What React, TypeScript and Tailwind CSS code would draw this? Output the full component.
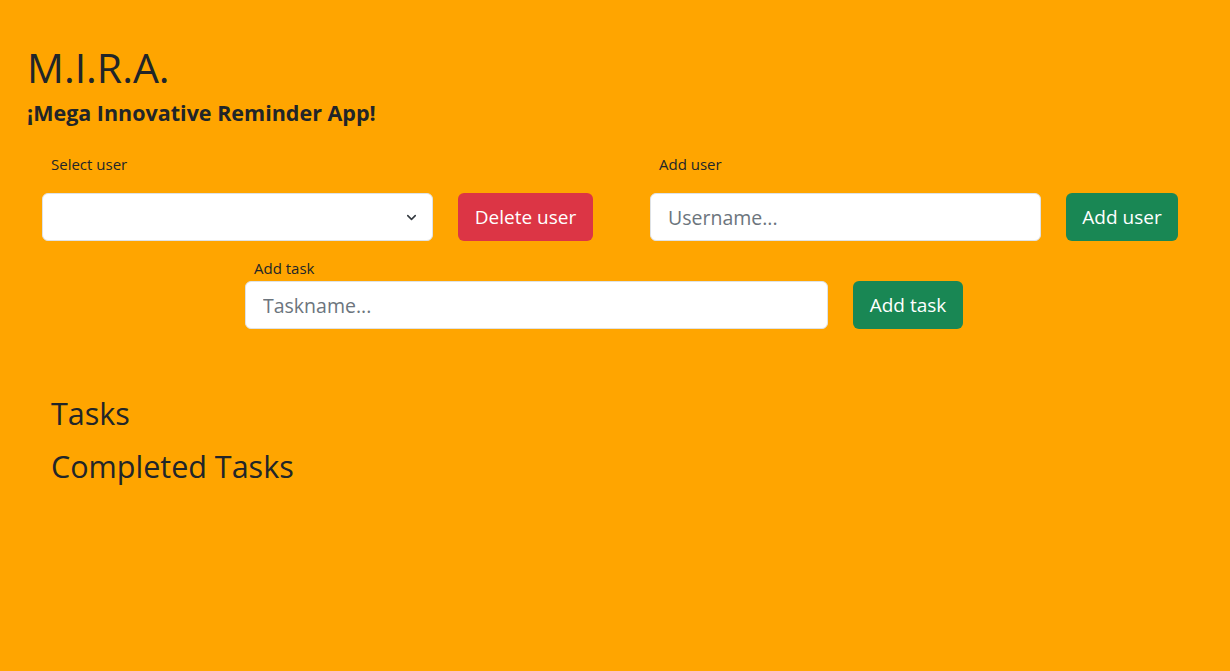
import { ChevronDown } from "lucide-react";

const font = { fontFamily: "'Open Sans', 'Noto Sans', sans-serif" };

function Label({ text }: { text: string }) {
  return <div className="pl-[9px] text-[15px] leading-[21px] text-[#212529]">{text}</div>;
}

export default function App() {
  return (
    <div className="min-h-[671px] w-full bg-[#ffa500] text-[#212529]" style={font}>
      <div className="px-[27px] pt-[43px]">
        <h1 className="text-[41px] leading-[48px] font-normal">M.I.R.A.</h1>
        <h5 className="mt-[9px] text-[21.5px] leading-[26px] font-bold">¡Mega Innovative Reminder App!</h5>
      </div>

      <div className="mt-[28px] flex pl-[42px]">
        <div className="flex w-[608px] flex-col">
          <Label text="Select user" />
          <div className="mt-[18px] flex items-center gap-[25px]">
            <div className="relative h-[48px] w-[391px] rounded-[6px] border border-[#dee2e6] bg-white">
              <ChevronDown className="absolute right-[13px] top-[16px] h-[15px] w-[15px] text-[#343a40]" strokeWidth={2.5} />
            </div>
            <button className="h-[48px] w-[135px] rounded-[6px] bg-[#dc3545] text-[19px] text-white">Delete user</button>
          </div>
        </div>
        <div className="flex flex-col">
          <Label text="Add user" />
          <div className="mt-[18px] flex items-center gap-[25px]">
            <input
              placeholder="Username..."
              className="h-[48px] w-[391px] rounded-[6px] border border-[#dee2e6] bg-white px-[17px] text-[19.5px] placeholder:text-[#6c757d] outline-none"
            />
            <button className="h-[48px] w-[112px] rounded-[6px] bg-[#198754] text-[19px] text-white">Add user</button>
          </div>
        </div>
      </div>

      <div className="mt-[17px] flex flex-col pl-[245px]">
        <Label text="Add task" />
        <div className="mt-[2px] flex items-center gap-[25px]">
          <input
            placeholder="Taskname..."
            className="h-[48px] w-[583px] rounded-[6px] border border-[#dee2e6] bg-white px-[17px] text-[19.5px] placeholder:text-[#6c757d] outline-none"
          />
          <button className="h-[48px] w-[110px] rounded-[6px] bg-[#198754] text-[19px] text-white">Add task</button>
        </div>
      </div>

      <div className="mt-[65px] px-[51px]">
        <h3 className="text-[30.5px] leading-[38px]">Tasks</h3>
        <h3 className="mt-[15px] text-[30.5px] leading-[38px]">Completed Tasks</h3>
      </div>
    </div>
  );
}
